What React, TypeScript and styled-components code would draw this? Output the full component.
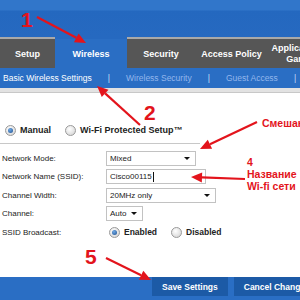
import styled, { createGlobalStyle } from "styled-components";

const GlobalStyle = createGlobalStyle`
  body {
    margin: 0;
    font-family: "Liberation Sans", Arial, sans-serif;
    background: #fff;
  }
`;

const Page = styled.div`
  position: relative;
  width: 300px;
  height: 300px;
  overflow: hidden;
  display: flex;
  flex-direction: column;
  background: #fff;
`;

const TopBand = styled.div`
  height: 37px;
  flex-shrink: 0;
  background: linear-gradient(#3176ca 0, #3176ca 10px, #2468bf 11px, #2669c0 100%);
`;

const TabBar = styled.div`
  display: flex;
  height: 31px;
  flex-shrink: 0;
`;

const Tab = styled.div<{ $active?: boolean; $width: number }>`
  width: ${({ $width }) => $width}px;
  flex-shrink: 0;
  box-sizing: border-box;
  display: flex;
  align-items: center;
  justify-content: center;
  text-align: center;
  color: #fff;
  font-weight: bold;
  font-size: 9px;
  line-height: 11px;
  background: ${({ $active }) => ($active ? "#2a6ec4" : "#565656")};
  border-top: 2px solid ${({ $active }) => ($active ? "#2669c0" : "#a9a9a9")};
  padding-top: 1px;
`;

const SubNav = styled.div`
  display: flex;
  align-items: center;
  height: 20px;
  flex-shrink: 0;
  background: #2a6ec4;
  padding-left: 3px;
  font-size: 8.5px;
  white-space: nowrap;
`;

const SubLink = styled.span<{ $active?: boolean }>`
  color: ${({ $active }) => ($active ? "#ffffff" : "#93b6ec")};
`;

const Sep = styled.span`
  color: #c9dcf6;
  margin: 0 16px;
`;

const Strip = styled.div`
  height: 4px;
  flex-shrink: 0;
  background: #e2e2e2;
  border-bottom: 1px solid #c8c8c8;
`;

const Content = styled.div`
  flex: 1;
  padding-top: 30px;
`;

const RadioRow = styled.div<{ $indent?: number }>`
  display: flex;
  align-items: center;
  height: 14px;
  padding-left: ${({ $indent }) => $indent ?? 5}px;
  gap: 14px;
`;

const RadioOption = styled.label<{ $bold?: boolean }>`
  display: flex;
  align-items: center;
  gap: 4px;
  font-size: ${({ $bold }) => ($bold ? "9px" : "8.5px")};
  font-weight: bold;
  color: #222;
  white-space: nowrap;
`;

const Radio = styled.span<{ $checked?: boolean }>`
  width: 9px;
  height: 9px;
  border-radius: 50%;
  border: 1px solid #9a9a9a;
  background: radial-gradient(circle at 40% 35%, #ffffff, #cfcfcf);
  display: flex;
  align-items: center;
  justify-content: center;
  &::after {
    content: "";
    display: ${({ $checked }) => ($checked ? "block" : "none")};
    width: 5px;
    height: 5px;
    border-radius: 50%;
    background: radial-gradient(circle at 40% 35%, #6fa9e6, #1d4f8e);
  }
`;

const Divider = styled.div`
  width: 200px;
  height: 1px;
  background: #c8c8c8;
  margin-top: 6px;
`;

const Form = styled.div`
  display: grid;
  grid-template-columns: 104px 1fr;
  grid-auto-rows: 18.5px;
  align-items: center;
  margin-top: 5px;
  padding-left: 2px;
`;

const Label = styled.span`
  font-size: 8px;
  color: #222;
  white-space: nowrap;
`;

const Select = styled.div<{ $width: number }>`
  width: ${({ $width }) => $width}px;
  height: 15px;
  box-sizing: border-box;
  border: 1px solid #c2c2c2;
  background: #fff;
  display: flex;
  align-items: center;
  padding: 0 3px;
  font-size: 8px;
  color: #222;
  justify-content: space-between;
`;

const Caret = styled.span`
  width: 0;
  height: 0;
  border-left: 3px solid transparent;
  border-right: 3px solid transparent;
  border-top: 3px solid #111;
  margin-right: 2px;
`;

const Cursor = styled.span`
  display: inline-block;
  width: 1px;
  height: 10px;
  background: #111;
  margin-left: 1px;
  vertical-align: middle;
`;

const Footer = styled.div`
  height: 23px;
  flex-shrink: 0;
  background: #2a6ec4;
  display: flex;
  align-items: flex-start;
  gap: 6px;
  padding-left: 152px;
`;

const FooterButton = styled.div`
  height: 19px;
  padding: 0 10px;
  background: #1c5aa6;
  color: #fff;
  font-weight: bold;
  font-size: 8.5px;
  display: flex;
  align-items: center;
  white-space: nowrap;
`;

const Note = styled.div<{ $size: number }>`
  position: absolute;
  color: #e3141c;
  font-weight: bold;
  font-size: ${({ $size }) => $size}px;
  line-height: 1.15;
  white-space: nowrap;
`;

const Overlay = styled.svg`
  position: absolute;
  left: 0;
  top: 0;
  pointer-events: none;
`;

function Arrow({ x1, y1, x2, y2 }: { x1: number; y1: number; x2: number; y2: number }) {
  const a = Math.atan2(y2 - y1, x2 - x1);
  const len = 11;
  const w = 5;
  const bx = x2 - len * Math.cos(a);
  const by = y2 - len * Math.sin(a);
  const px = -Math.sin(a) * w;
  const py = Math.cos(a) * w;
  return (
    <g>
      <line x1={x1} y1={y1} x2={bx} y2={by} stroke="#e3141c" strokeWidth={2.2} />
      <polygon
        points={`${x2},${y2} ${bx + px},${by + py} ${bx - px},${by - py}`}
        fill="#e3141c"
      />
    </g>
  );
}

export default function App() {
  return (
    <>
      <GlobalStyle />
      <Page>
        <TopBand />
        <TabBar>
          <Tab $width={55}>Setup</Tab>
          <Tab $width={72} $active>Wireless</Tab>
          <Tab $width={68}>Security</Tab>
          <Tab $width={73}>Access Policy</Tab>
          <Tab $width={70}>Applications &amp;<br />Gaming</Tab>
        </TabBar>
        <SubNav>
          <SubLink $active>Basic Wireless Settings</SubLink>
          <Sep>|</Sep>
          <SubLink>Wireless Security</SubLink>
          <Sep>|</Sep>
          <SubLink>Guest Access</SubLink>
          <Sep>|</Sep>
        </SubNav>
        <Strip />
        <Content>
          <RadioRow>
            <RadioOption $bold>
              <Radio $checked />
              Manual
            </RadioOption>
            <RadioOption $bold>
              <Radio />
              Wi-Fi Protected Setup™
            </RadioOption>
          </RadioRow>
          <Divider />
          <Form>
            <Label>Network Mode:</Label>
            <Select $width={90}>
              Mixed
              <Caret />
            </Select>
            <Label>Network Name (SSID):</Label>
            <Select $width={100}>
              <span>
                Cisco00115
                <Cursor />
              </span>
            </Select>
            <Label>Channel Width:</Label>
            <Select $width={110}>
              20MHz only
              <Caret />
            </Select>
            <Label>Channel:</Label>
            <Select $width={37}>
              Auto
              <Caret />
            </Select>
            <Label>SSID Broadcast:</Label>
            <RadioRow $indent={3}>
              <RadioOption>
                <Radio $checked />
                Enabled
              </RadioOption>
              <RadioOption>
                <Radio />
                Disabled
              </RadioOption>
            </RadioRow>
          </Form>
        </Content>
        <Footer>
          <FooterButton>Save Settings</FooterButton>
          <FooterButton>Cancel Changes</FooterButton>
        </Footer>

        <Note $size={21} style={{ left: 21, top: 8 }}>1</Note>
        <Note $size={21} style={{ left: 144, top: 101 }}>2</Note>
        <Note $size={10.5} style={{ left: 262, top: 117 }}>Смешанный</Note>
        <Note $size={10.5} style={{ left: 247, top: 156 }}>
          4
          <br />
          Название
          <br />
          Wi-fi сети
        </Note>
        <Note $size={21} style={{ left: 85, top: 245 }}>5</Note>

        <Overlay width={300} height={300} viewBox="0 0 300 300">
          <Arrow x1={37} y1={17} x2={86} y2={43} />
          <Arrow x1={140} y1={125} x2={97} y2={86} />
          <Arrow x1={257} y1={122} x2={200} y2={149} />
          <Arrow x1={245} y1={179} x2={191} y2={177} />
          <Arrow x1={106} y1={258} x2={151} y2={280} />
        </Overlay>
      </Page>
    </>
  );
}
